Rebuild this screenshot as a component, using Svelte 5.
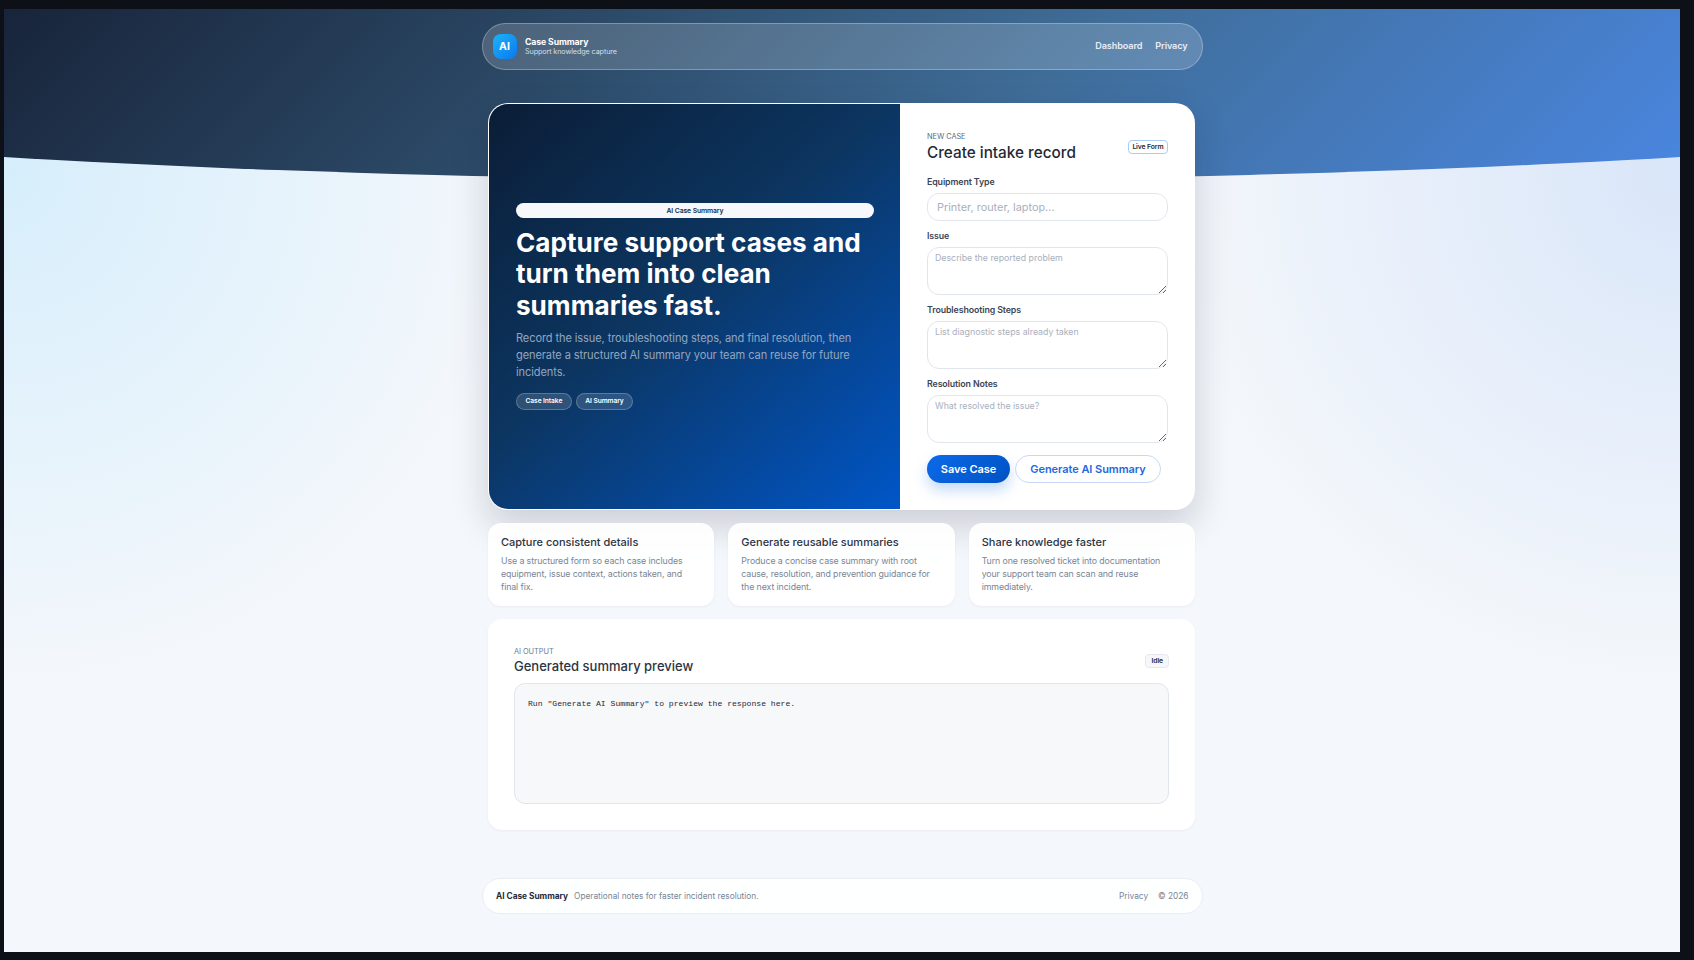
<script lang="ts">
  const features = [
    {
      title: 'Capture consistent details',
      text: 'Use a structured form so each case includes equipment, issue context, actions taken, and final fix.'
    },
    {
      title: 'Generate reusable summaries',
      text: 'Produce a concise case summary with root cause, resolution, and prevention guidance for the next incident.'
    },
    {
      title: 'Share knowledge faster',
      text: 'Turn one resolved ticket into documentation your support team can scan and reuse immediately.'
    }
  ];
</script>

<div class="shell">
  <div class="band"></div>

  <header class="nav">
    <div class="brand">
      <span class="logo">AI</span>
      <div class="brand-text">
        <strong>Case Summary</strong>
        <small>Support knowledge capture</small>
      </div>
    </div>
    <nav class="nav-links">
      <a href="#dashboard">Dashboard</a>
      <a href="#privacy">Privacy</a>
    </nav>
  </header>

  <main class="main">
    <section class="hero-card">
      <div class="hero-left">
        <span class="pill">AI Case Summary</span>
        <h1>Capture support cases and turn them into clean summaries fast.</h1>
        <p>Record the issue, troubleshooting steps, and final resolution, then generate a structured AI summary your team can reuse for future incidents.</p>
        <div class="chips">
          <span>Case Intake</span>
          <span>AI Summary</span>
        </div>
      </div>

      <form class="hero-form">
        <div class="form-head">
          <div>
            <div class="eyebrow">NEW CASE</div>
            <h2>Create intake record</h2>
          </div>
          <span class="badge live">Live Form</span>
        </div>

        <label for="equipment">Equipment Type</label>
        <input id="equipment" class="big" placeholder="Printer, router, laptop..." />

        <label for="issue">Issue</label>
        <textarea id="issue" placeholder="Describe the reported problem"></textarea>

        <label for="steps">Troubleshooting Steps</label>
        <textarea id="steps" placeholder="List diagnostic steps already taken"></textarea>

        <label for="notes">Resolution Notes</label>
        <textarea id="notes" placeholder="What resolved the issue?"></textarea>

        <div class="actions">
          <button type="button" class="btn-primary">Save Case</button>
          <button type="button" class="btn-outline">Generate AI Summary</button>
        </div>
      </form>
    </section>

    <section class="features">
      {#each features as f}
        <article class="feature">
          <h3>{f.title}</h3>
          <p>{f.text}</p>
        </article>
      {/each}
    </section>

    <section class="output">
      <div class="output-head">
        <div>
          <div class="eyebrow">AI OUTPUT</div>
          <h2>Generated summary preview</h2>
        </div>
        <span class="badge idle">Idle</span>
      </div>
      <pre>Run "Generate AI Summary" to preview the response here.</pre>
    </section>
  </main>

  <footer class="footer">
    <div class="foot-left">
      <strong>AI Case Summary</strong>
      <span>Operational notes for faster incident resolution.</span>
    </div>
    <div class="foot-right">
      <a href="#privacy">Privacy</a>
      <span>© 2026</span>
    </div>
  </footer>
</div>

<style>
  :global(body) {
    background: #0d1117;
    font-family: Inter, "Liberation Sans", sans-serif;
  }

  .shell {
    position: relative;
    overflow: hidden;
    height: 943px;
    margin: 9px 14px 8px 4px;
    padding-top: 14px;
    box-sizing: border-box;
    background:
      radial-gradient(circle at 0 17%, #d6eefb 0, rgba(214, 238, 251, 0) 520px),
      radial-gradient(circle at 100% 17%, #d9e6f9 0, rgba(217, 230, 249, 0) 520px),
      #f4f7fb;
  }

  .band {
    position: absolute;
    top: 0;
    left: 0;
    right: 0;
    height: 171px;
    background: linear-gradient(135deg, #18243a 0%, #2c4a68 33%, #3f6d98 60%, #4a86e0 100%);
    clip-path: ellipse(100% 100% at 50% 0);
  }

  .nav {
    position: relative;
    display: flex;
    align-items: center;
    justify-content: space-between;
    width: 721px;
    height: 47px;
    margin: 0 auto;
    padding: 0 14px 0 10px;
    box-sizing: border-box;
    border: 1px solid rgba(255, 255, 255, 0.28);
    border-radius: 24px;
    background: rgba(255, 255, 255, 0.17);
    color: #fff;
  }

  .brand {
    display: flex;
    align-items: center;
    gap: 8.5px;
  }

  .logo {
    display: grid;
    place-items: center;
    width: 24px;
    height: 25px;
    border-radius: 8px;
    background: linear-gradient(135deg, #1cb4f5, #0b78f0);
    font-size: 10.5px;
    font-weight: 700;
  }

  .brand-text {
    display: flex;
    flex-direction: column;
  }

  .brand-text strong {
    font-size: 8.7px;
    line-height: 10px;
    font-weight: 700;
    letter-spacing: -0.1px;
  }

  .brand-text small {
    font-size: 7.2px;
    line-height: 9px;
    color: #d7dfe8;
    letter-spacing: -0.1px;
  }

  .nav-links {
    display: flex;
    gap: 13px;
    margin-top: -2px;
  }

  .nav-links a {
    color: #e8eef6;
    font-size: 9.1px;
    font-weight: 600;
    letter-spacing: -0.1px;
    text-decoration: none;
  }

  .main {
    position: relative;
    display: flex;
    flex-direction: column;
    gap: 13px;
    width: 707px;
    margin: 33px 0 0 484px;
  }

  .hero-card {
    display: grid;
    grid-template-columns: 411px 1fr;
    height: 407px;
    box-sizing: border-box;
    border: 1px solid rgba(255, 255, 255, 0.85);
    border-radius: 20px;
    overflow: hidden;
    background: #fff;
    box-shadow: 0 16px 36px rgba(15, 23, 42, 0.18);
  }

  .hero-left {
    display: flex;
    flex-direction: column;
    justify-content: center;
    padding: 0 26px 0 27px;
    background: linear-gradient(140deg, #0b1d36 0%, #0c3560 45%, #0056c8 100%);
    color: #fff;
  }

  .pill {
    height: 15px;
    line-height: 15px;
    border-radius: 8px;
    background: #f6f8fb;
    color: #15304f;
    font-size: 6.8px;
    font-weight: 600;
    text-align: center;
    letter-spacing: -0.1px;
  }

  .hero-left h1 {
    margin: 9px 0 0;
    font-size: 26.1px;
    line-height: 31.4px;
    font-weight: 700;
  }

  .hero-left p {
    margin: 9.5px 0 0;
    font-size: 11.05px;
    line-height: 16.6px;
    color: #92a6c0;
    letter-spacing: -0.1px;
  }

  .chips {
    display: flex;
    gap: 4px;
    margin-top: 13px;
  }

  .chips span {
    padding: 0 8.5px;
    height: 15px;
    line-height: 15px;
    border: 1px solid rgba(255, 255, 255, 0.22);
    border-radius: 9px;
    background: rgba(255, 255, 255, 0.14);
    font-size: 6.7px;
    font-weight: 600;
    letter-spacing: -0.1px;
  }

  .hero-form {
    display: flex;
    flex-direction: column;
    padding: 28px 26px 0 27px;
  }

  .form-head,
  .output-head {
    display: flex;
    justify-content: space-between;
    align-items: center;
  }

  .eyebrow {
    font-size: 7.4px;
    line-height: 10px;
    color: #5d6b7e;
    letter-spacing: -0.05px;
  }

  h2 {
    margin: 2px 0 0;
    font-size: 15.3px;
    line-height: 18px;
    font-weight: 500;
    color: #1f2937;
  }

  .output h2 {
    margin: 0;
    font-size: 13px;
    color: #2b3441;
  }

  .badge {
    box-sizing: border-box;
    height: 14px;
    line-height: 12px;
    padding: 0 3.5px;
    border-radius: 4px;
    font-size: 6.8px;
    font-weight: 600;
    color: #1a2a3d;
    letter-spacing: -0.1px;
  }

  .live {
    border: 1px solid #a9cdf9;
    background: #fff;
  }

  .idle {
    padding: 0 5px;
    border: 1px solid #e5e8ee;
    background: #f6f7f9;
  }

  label {
    margin-top: 8px;
    font-size: 8.8px;
    line-height: 13px;
    font-weight: 600;
    color: #3b4654;
    letter-spacing: -0.1px;
  }

  .form-head + label {
    margin-top: 13px;
  }

  input,
  textarea {
    display: block;
    box-sizing: border-box;
    width: 100%;
    margin-top: 5px;
    border: 1px solid #e1e5ec;
    border-radius: 12px;
    background: #fff;
    font-family: inherit;
    color: #1f2937;
  }

  input {
    height: 28px;
    padding: 0 9px;
    font-size: 10.9px;
  }

  textarea {
    height: 48px;
    padding: 4px 7px;
    font-size: 8.8px;
    line-height: 12px;
  }

  input::placeholder,
  textarea::placeholder {
    color: #a9b0bd;
    opacity: 1;
  }

  .actions {
    display: flex;
    gap: 5px;
    margin-top: 12px;
  }

  button {
    height: 28px;
    border-radius: 14px;
    font-family: inherit;
    font-size: 11px;
    font-weight: 600;
    letter-spacing: -0.05px;
    cursor: pointer;
  }

  .btn-primary {
    width: 83px;
    border: 0;
    color: #fff;
    background: linear-gradient(135deg, #0c6ae8, #0052c4);
    box-shadow: 0 7px 14px rgba(13, 106, 232, 0.25);
  }

  .btn-outline {
    width: 146px;
    border: 1px solid #c5d9f6;
    color: #2468dc;
    background: #fff;
  }

  .features {
    display: grid;
    grid-template-columns: repeat(3, 1fr);
    gap: 14px;
  }

  .feature {
    box-sizing: border-box;
    height: 83px;
    padding: 11px 13px;
    border-radius: 13px;
    background: rgba(255, 255, 255, 0.92);
    box-shadow: 0 1px 3px rgba(15, 23, 42, 0.05);
  }

  .feature h3 {
    margin: 0;
    font-size: 11px;
    line-height: 16px;
    font-weight: 500;
    color: #2b3441;
  }

  .feature p {
    margin: 4px 0 0;
    padding-right: 6px;
    font-size: 8.8px;
    line-height: 13px;
    color: #7a8595;
    letter-spacing: -0.1px;
  }

  .output {
    box-sizing: border-box;
    height: 211px;
    padding: 28px 26px 0 26px;
    border-radius: 14px;
    background: rgba(255, 255, 255, 0.92);
    box-shadow: 0 1px 3px rgba(15, 23, 42, 0.05);
  }

  .output .eyebrow {
    color: #6d7c90;
  }

  pre {
    box-sizing: border-box;
    height: 121px;
    margin: 8px 0 0;
    padding: 13px 13px;
    border: 1px solid #e1e5ec;
    border-radius: 11px;
    background: #f7f8fa;
    font-family: "Liberation Mono", monospace;
    font-size: 8.1px;
    line-height: 13px;
    color: #1f2937;
  }

  .footer {
    position: relative;
    display: flex;
    align-items: center;
    justify-content: space-between;
    box-sizing: border-box;
    width: 721px;
    height: 36px;
    margin: 48px auto 0;
    padding: 0 13px 0 13.5px;
    border: 1px solid #e8edf3;
    border-radius: 18px;
    background: rgba(255, 255, 255, 0.9);
    font-size: 8.3px;
    color: #7a8595;
  }

  .foot-left {
    display: flex;
    gap: 6px;
    align-items: center;
  }

  .foot-left strong {
    color: #1f2937;
    font-weight: 700;
  }

  .foot-right {
    display: flex;
    gap: 10px;
  }

  .foot-right a {
    color: inherit;
    text-decoration: none;
  }
</style>
